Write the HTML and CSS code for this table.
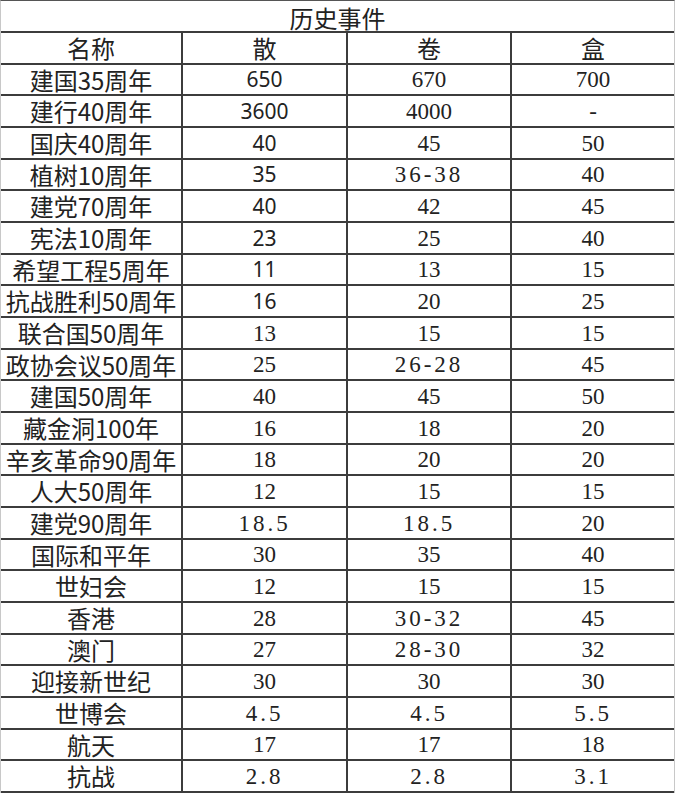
FILE: index.html
```html
<!DOCTYPE html>
<html lang="zh">
<head>
<meta charset="utf-8">
<link rel="stylesheet" href="styles.css">
</head>
<body>
<div class="sheet">
  <div class="c title">历史事件</div>
  <div class="c h">名称</div><div class="c h">散</div><div class="c h">卷</div><div class="c h last">盒</div>
  <div class="c n">建国35周年</div><div class="c v s">650</div><div class="c v">670</div><div class="c v last">700</div>
  <div class="c n">建行40周年</div><div class="c v s">3600</div><div class="c v">4000</div><div class="c v last">-</div>
  <div class="c n">国庆40周年</div><div class="c v s">40</div><div class="c v">45</div><div class="c v last">50</div>
  <div class="c n">植树10周年</div><div class="c v s">35</div><div class="c v sp">36-38</div><div class="c v last">40</div>
  <div class="c n">建党70周年</div><div class="c v s">40</div><div class="c v">42</div><div class="c v last">45</div>
  <div class="c n">宪法10周年</div><div class="c v s">23</div><div class="c v">25</div><div class="c v last">40</div>
  <div class="c n">希望工程5周年</div><div class="c v s">11</div><div class="c v">13</div><div class="c v last">15</div>
  <div class="c n">抗战胜利50周年</div><div class="c v s">16</div><div class="c v">20</div><div class="c v last">25</div>
  <div class="c n">联合国50周年</div><div class="c v">13</div><div class="c v">15</div><div class="c v last">15</div>
  <div class="c n">政协会议50周年</div><div class="c v">25</div><div class="c v sp">26-28</div><div class="c v last">45</div>
  <div class="c n">建国50周年</div><div class="c v">40</div><div class="c v">45</div><div class="c v last">50</div>
  <div class="c n">藏金洞100年</div><div class="c v">16</div><div class="c v">18</div><div class="c v last">20</div>
  <div class="c n">辛亥革命90周年</div><div class="c v">18</div><div class="c v">20</div><div class="c v last">20</div>
  <div class="c n">人大50周年</div><div class="c v">12</div><div class="c v">15</div><div class="c v last">15</div>
  <div class="c n">建党90周年</div><div class="c v sp">18.5</div><div class="c v sp">18.5</div><div class="c v last">20</div>
  <div class="c n">国际和平年</div><div class="c v">30</div><div class="c v">35</div><div class="c v last">40</div>
  <div class="c n">世妇会</div><div class="c v">12</div><div class="c v">15</div><div class="c v last">15</div>
  <div class="c n">香港</div><div class="c v">28</div><div class="c v sp">30-32</div><div class="c v last">45</div>
  <div class="c n">澳门</div><div class="c v">27</div><div class="c v sp">28-30</div><div class="c v last">32</div>
  <div class="c n">迎接新世纪</div><div class="c v">30</div><div class="c v">30</div><div class="c v last">30</div>
  <div class="c n">世博会</div><div class="c v sp">4.5</div><div class="c v sp">4.5</div><div class="c v last sp">5.5</div>
  <div class="c n">航天</div><div class="c v">17</div><div class="c v">17</div><div class="c v last">18</div>
  <div class="c n">抗战</div><div class="c v sp">2.8</div><div class="c v sp">2.8</div><div class="c v last sp">3.1</div>
</div>
</body>
</html>
```
FILE: styles.css
```css
html, body {
  margin: 0;
  padding: 0;
  background: #fff;
}
.sheet {
  box-sizing: border-box;
  width: 675px;
  height: 793px;
  display: grid;
  grid-template-columns: 182px 165px 164px 1fr;
  grid-template-rows: 32px repeat(24, 1fr);
  border-left: 1px solid #c8c8c8;
  border-right: 1px solid #c8c8c8;
  border-top: 1px solid #555;
  color: #222;
  font-family: "Noto Sans CJK SC", "Noto Sans", sans-serif;
}
.c {
  box-sizing: border-box;
  display: flex;
  align-items: center;
  justify-content: center;
  min-height: 0;
  border-right: 2px solid #3c3c3c;
  border-bottom: 2px solid #3c3c3c;
  font-size: 24px;
  line-height: 1.15;
  white-space: nowrap;
}
.c.last {
  border-right: none;
}
.title {
  grid-column: 1 / span 4;
  border-right: none;
  padding-top: 3px;
  line-height: 1;
}
.v {
  font-family: "Liberation Serif", "Noto Sans CJK SC", serif;
  font-size: 23px;
  padding-top: 2px;
}
.v.s {
  font-family: "Noto Sans", "Noto Sans CJK SC", sans-serif;
  font-size: 21px;
  padding-top: 0;
}
.v.sp {
  letter-spacing: 3px;
}
```
